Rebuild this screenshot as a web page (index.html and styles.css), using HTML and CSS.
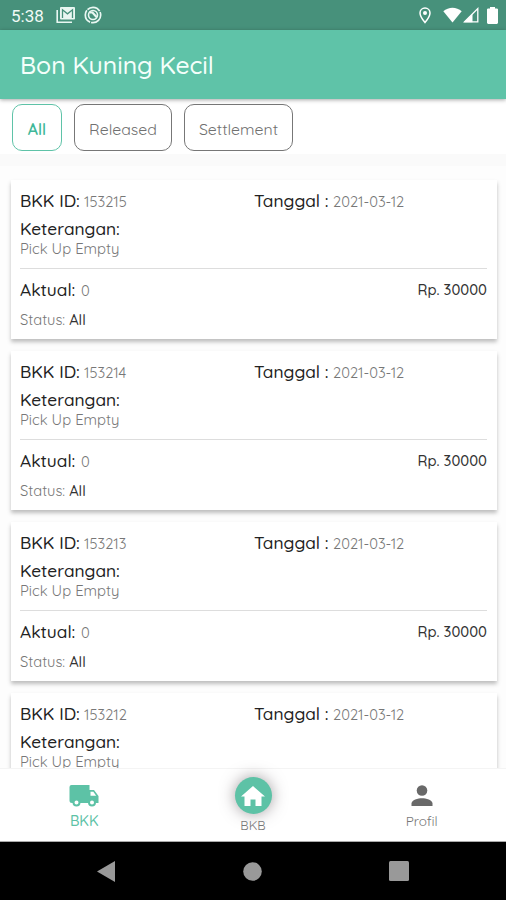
FILE: index.html
```html
<!DOCTYPE html>
<html lang="id">
<head>
    <meta charset="UTF-8">
    <meta name="viewport" content="width=device-width, initial-scale=1.0">
    <title>Bon Kuning Kecil</title>
    <link rel="stylesheet" href="styles.css">
</head>
<body>
    <div class="status-bar">
        <span class="clock">5:38</span>
        <svg class="icon-mail" width="20" height="18" viewBox="0 0 20 18">
            <path d="M1.2 4v12.3H16" fill="none" stroke="#e9f7f2" stroke-width="1.6"/>
            <rect x="4" y="1" width="15" height="12.5" rx="1" fill="#e9f7f2"/>
            <path d="M6.500 12V3.800l5 4 5-4V12" fill="none" stroke="#47917b" stroke-width="1.300"/>
        </svg>
        <svg class="icon-sync" width="18" height="18" viewBox="0 0 18 18" fill="none" stroke="#e9f7f2">
            <circle cx="9" cy="9" r="7.700" stroke-width="1.700" stroke-dasharray="14 1"/>
            <circle cx="9" cy="9" r="4.500" stroke-width="1.600"/>
            <path d="M5.500 6.500h3l4 4.500" stroke-width="2.200"/>
        </svg>
        <div class="status-right">
            <svg class="icon-pin" width="12" height="17" viewBox="0 0 12 17">
                <path d="M6 1C3.200 1 1 3.200 1 6c0 3.600 5 9.500 5 9.500S11 9.600 11 6c0-2.800-2.200-5-5-5z" fill="none" stroke="#fff" stroke-width="1.500"/>
                <circle cx="6" cy="6" r="2" fill="#fff"/>
            </svg>
            <svg class="icon-wifi" width="19" height="16" viewBox="0 0 19 16" fill="#fff">
                <path d="M.3 4.300C5.500-.5 13.500-.5 18.700 4.300L9.500 15.500z"/>
            </svg>
            <svg class="icon-signal" width="16" height="16" viewBox="0 0 16 16">
                <path d="M1.600 14.800L14.800 1.600v13.200z" fill="none" stroke="#fff" stroke-width="1.300"/>
                <path d="M1 15.300L9.500 7v8.300z" fill="#fff"/>
            </svg>
            <svg class="icon-battery" width="11" height="17" viewBox="0 0 11 17" fill="#fff">
                <path d="M3 0h5v1.500h2.200l.8.800V16l-1 1H1l-1-1V2.300l.8-.8H3z"/>
            </svg>
        </div>
    </div>

    <header class="app-bar">
        <h1>Bon Kuning Kecil</h1>
    </header>

    <div class="filters">
        <button class="chip active">All</button>
        <button class="chip released">Released</button>
        <button class="chip settlement">Settlement</button>
    </div>

    <main class="list">
        <div class="card">
            <div class="row head">
                <div><b class="id-label">BKK ID:</b><span class="value">153215</span></div>
                <div><b class="date-label">Tanggal :</b><span class="value">2021-03-12</span></div>
            </div>
            <b class="note-label">Keterangan:</b>
            <p class="note">Pick Up Empty</p>
            <div class="row total">
                <div><b class="actual-label">Aktual:</b><span class="value">0</span></div>
                <div class="amount">Rp. 30000</div>
            </div>
            <div class="state">Status: <span>All</span></div>
        </div>

        <div class="card">
            <div class="row head">
                <div><b class="id-label">BKK ID:</b><span class="value">153214</span></div>
                <div><b class="date-label">Tanggal :</b><span class="value">2021-03-12</span></div>
            </div>
            <b class="note-label">Keterangan:</b>
            <p class="note">Pick Up Empty</p>
            <div class="row total">
                <div><b class="actual-label">Aktual:</b><span class="value">0</span></div>
                <div class="amount">Rp. 30000</div>
            </div>
            <div class="state">Status: <span>All</span></div>
        </div>

        <div class="card">
            <div class="row head">
                <div><b class="id-label">BKK ID:</b><span class="value">153213</span></div>
                <div><b class="date-label">Tanggal :</b><span class="value">2021-03-12</span></div>
            </div>
            <b class="note-label">Keterangan:</b>
            <p class="note">Pick Up Empty</p>
            <div class="row total">
                <div><b class="actual-label">Aktual:</b><span class="value">0</span></div>
                <div class="amount">Rp. 30000</div>
            </div>
            <div class="state">Status: <span>All</span></div>
        </div>

        <div class="card">
            <div class="row head">
                <div><b class="id-label">BKK ID:</b><span class="value">153212</span></div>
                <div><b class="date-label">Tanggal :</b><span class="value">2021-03-12</span></div>
            </div>
            <b class="note-label">Keterangan:</b>
            <p class="note">Pick Up Empty</p>
        </div>
    </main>

    <nav class="tabs">
        <a class="tab active">
            <svg width="30" height="22" viewBox="0 0 30 22">
                <path d="M2.500 0H20.500V5H25l4.500 6v7H3A2.500 2.500 0 0 1 .5 15.500V2A2 2 0 0 1 2.500 0z" fill="#5dc2a6"/>
                <path d="M21.500 6.800h2.800l2.900 3.900h-5.700z" fill="#fff"/>
                <g fill="#fff" stroke="#5dc2a6" stroke-width="2">
                    <circle cx="7.500" cy="17.500" r="3"/>
                    <circle cx="23" cy="17.500" r="3"/>
                </g>
            </svg>
            <span>BKK</span>
        </a>
        <a class="tab home">
            <div class="home-circle">
                <svg width="24" height="20" viewBox="0 0 24 20" fill="#fff">
                    <path d="M12 0L0 10.500h3.500V20h6v-6.500h5V20h6v-9.500H24z"/>
                </svg>
            </div>
            <span>BKB</span>
        </a>
        <a class="tab profile">
            <svg width="22" height="22" viewBox="0 0 22 22" fill="#696969">
                <circle cx="11" cy="5.500" r="5.300"/>
                <path d="M.5 21v-2.500C.5 15 7 13.200 11 13.200S21.500 15 21.500 18.500V21z"/>
            </svg>
            <span>Profil</span>
        </a>
    </nav>

    <div class="system-nav">
        <svg width="18" height="21" viewBox="0 0 18 21"><path d="M0 10.500L18 0v21z" fill="#999"/></svg>
        <svg width="19" height="19" viewBox="0 0 19 19"><circle cx="9.500" cy="9.500" r="9.300" fill="#999"/></svg>
        <svg width="20" height="20" viewBox="0 0 20 20"><rect width="20" height="20" rx="1.500" fill="#999"/></svg>
    </div>
</body>
</html>
```
FILE: styles.css
```css
* {
    box-sizing: border-box;
}
body {
    font-family: Quicksand, Lato, sans-serif;
    background: #fdfdfd;
    margin: 0;
    height: 100vh;
    display: flex;
    flex-direction: column;
    overflow: hidden;
}
svg {
    display: block;
    flex-shrink: 0;
}
.status-bar {
    height: 30px;
    flex-shrink: 0;
    background: #47917b;
    display: flex;
    align-items: center;
    padding: 0 8px 0 11px;
}
.clock {
    width: 45px;
    color: #f0faf6;
    font: 17px Roboto, sans-serif;
    padding-top: 2px;
}
.icon-sync {
    margin-left: 8px;
}
.status-right {
    display: flex;
    align-items: center;
    margin-left: auto;
}
.icon-wifi {
    margin-left: 12px;
}
.icon-signal {
    margin-left: 1px;
}
.icon-battery {
    margin-left: 8px;
}
.app-bar {
    height: 69px;
    flex-shrink: 0;
    background: #5fc3a8;
    padding-left: 20px;
    display: flex;
    align-items: center;
    box-shadow: 0 1px 4px rgba(0, 0, 0, 0.35);
    position: relative;
}
.app-bar h1 {
    margin: 0;
    color: #f4fffb;
    font-size: 24.7px;
    font-weight: 500;
}
.filters {
    height: 67px;
    flex-shrink: 0;
    background: #fff;
    display: flex;
    align-items: flex-start;
    gap: 12px;
    padding: 5px 12px 0;
    border-bottom: 12px solid #fafafa;
}
.chip {
    height: 47px;
    width: 98px;
    padding: 2px 0 0;
    border: 1px solid #777;
    border-radius: 10px;
    background: #fff;
    color: #707070;
    font-family: inherit;
    font-size: 15.9px;
}
.chip.active {
    width: 50px;
    border-color: #5fc3a8;
    color: #3fb899;
    font-weight: 600;
}
.chip.settlement {
    width: 109px;
}
.list {
    flex: 1;
    min-height: 0;
    overflow: hidden;
    padding: 14px 9px 0 11px;
    display: flex;
    flex-direction: column;
    gap: 12px;
}
.card {
    height: 159px;
    flex-shrink: 0;
    background: #fff;
    padding: 10px 10px 0 9px;
    box-shadow: 0 3px 4px rgba(0, 0, 0, 0.25);
}
.row {
    display: flex;
    line-height: 22px;
}
.row > div {
    flex: 1;
}
.row.head > div:first-child {
    flex: 0 0 234px;
}
b {
    color: #222;
    font-size: 17.3px;
    font-weight: 500;
    display: inline-block;
}
.value {
    color: #777;
    font-size: 14.7px;
}
.id-label {
    width: 64px;
}
.date-label {
    width: 79px;
}
.note-label {
    display: block;
    margin-top: 6px;
    line-height: 20px;
}
.note {
    margin: 0;
    padding-bottom: 9px;
    border-bottom: 1px solid #ddd;
    color: #777;
    font-size: 14.8px;
    line-height: 20px;
}
.total {
    margin-top: 10px;
}
.actual-label {
    width: 61px;
}
.row > .amount {
    color: #333;
    font-size: 14.8px;
    font-weight: 500;
    text-align: right;
}
.state {
    margin-top: 8px;
    color: #777;
    font-size: 14.7px;
    line-height: 20px;
}
.state span {
    color: #333;
    font-weight: 500;
}
.tabs {
    height: 74px;
    flex-shrink: 0;
    background: #fff;
    border-top: 1px solid #f4f4f4;
    border-bottom: 1px solid #aaa;
    display: flex;
    position: relative;
}
.tab {
    flex: 1;
    display: flex;
    flex-direction: column;
    align-items: center;
    padding-top: 16px;
    color: #777;
    font-size: 13.5px;
    line-height: 16px;
}
.tab span {
    margin-top: 6px;
}
.tab.active {
    color: #5dc2a6;
    font-size: 14.5px;
    font-weight: 500;
}
.tab.home {
    padding-top: 8px;
    font-size: 12.8px;
}
.tab.home span {
    margin-top: 3px;
}
.home-circle {
    width: 37px;
    height: 37px;
    border-radius: 50%;
    background: #5dc2a6;
    box-shadow: 0 0 15px rgba(70, 60, 65, 0.5);
    display: flex;
    align-items: center;
    justify-content: center;
}
.system-nav {
    height: 58px;
    flex-shrink: 0;
    background: #000;
    display: flex;
    align-items: center;
    justify-content: space-between;
    padding: 0 97px;
}
```
